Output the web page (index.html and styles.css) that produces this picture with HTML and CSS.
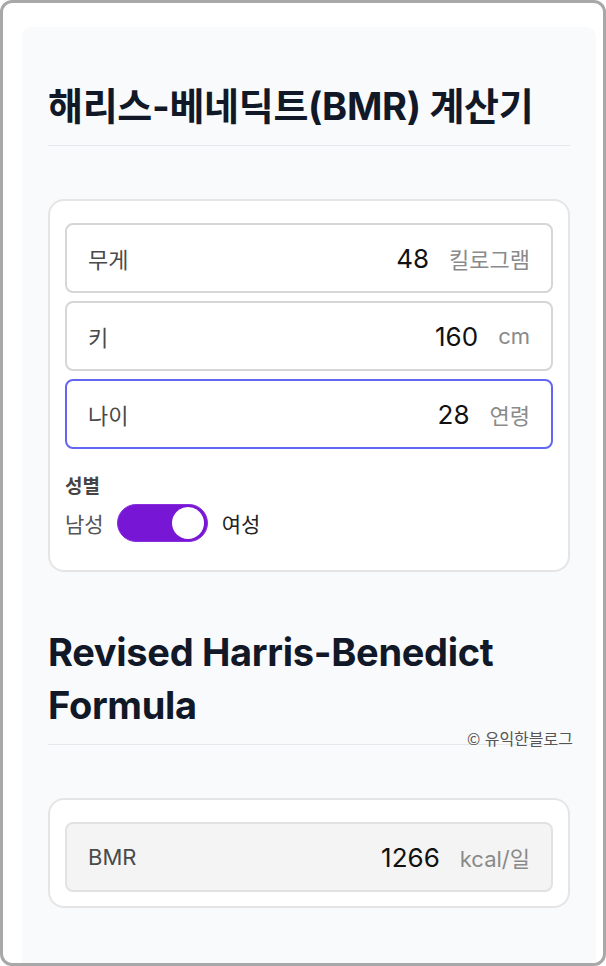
FILE: index.html
```html
<!DOCTYPE html>
<html lang="ko">
<head>
<meta charset="utf-8">
<title>해리스-베네딕트(BMR) 계산기</title>
<link rel="stylesheet" href="styles.css">
</head>
<body>
<div class="frame">
  <div class="panel">
    <div class="heading">
      <h2 class="title">해리스-베네딕트(BMR) 계산기</h2>
    </div>

    <div class="card card-inputs">
      <div class="field">
        <span class="label">무게</span>
        <span class="value">48</span>
        <span class="unit">킬로그램</span>
      </div>
      <div class="field">
        <span class="label">키</span>
        <span class="value">160</span>
        <span class="unit">cm</span>
      </div>
      <div class="field focused">
        <span class="label">나이</span>
        <span class="value">28</span>
        <span class="unit">연령</span>
      </div>
      <div class="gender">
        <div class="gender-title">성별</div>
        <div class="gender-row">
          <span class="g-off">남성</span>
          <span class="toggle"><span class="knob"></span></span>
          <span class="g-on">여성</span>
        </div>
      </div>
    </div>

    <div class="heading">
      <h2 class="title">Revised Harris-Benedict Formula</h2>
      <span class="watermark">© 유익한블로그</span>
    </div>

    <div class="card card-result">
      <div class="field readonly">
        <span class="label latin">BMR</span>
        <span class="value">1266</span>
        <span class="unit">kcal/일</span>
      </div>
    </div>
  </div>
</div>
</body>
</html>
```

FILE: styles.css
```css
html, body {
  margin: 0;
  padding: 0;
  background: #ffffff;
}

body {
  font-family: "Inter", "Noto Sans CJK KR", sans-serif;
}

.frame {
  box-sizing: border-box;
  width: 606px;
  height: 966px;
  border: 3px solid #a8a8a8;
  border-radius: 12px;
  background: #ffffff;
  overflow: hidden;
  padding: 24px 7px 0 19px;
}

.panel {
  box-sizing: border-box;
  height: 100%;
  background: #f9fafb;
  border-radius: 10px 10px 0 0;
  padding: 53px 26px 0 26px;
}

.heading {
  position: relative;
  border-bottom: 1px solid #e5e7eb;
  padding-bottom: 12px;
  margin-bottom: 53px;
}

.title {
  margin: 0;
  font-size: 38px;
  line-height: 53px;
  font-weight: 700;
  color: #111827;
  letter-spacing: -0.3px;
}

.watermark {
  position: absolute;
  right: -3px;
  bottom: -4px;
  font-family: "Noto Sans CJK KR", sans-serif;
  font-size: 16px;
  line-height: 19px;
  color: #555555;
}

.card {
  background: #ffffff;
  border: 2px solid #e5e5e5;
  border-radius: 16px;
  padding: 14px 15px 14px 15px;
}

.card-inputs {
  padding-bottom: 28px;
  margin-bottom: 54px;
}

.field {
  box-sizing: border-box;
  height: 70px;
  margin-top: 8px;
  border: 2px solid #d6d6d6;
  border-radius: 8px;
  background: #ffffff;
  display: flex;
  align-items: center;
  padding: 0 21px 0 21px;
}

.field.focused {
  border-color: #6366f1;
}

.field.readonly {
  background: #f4f4f4;
  border-color: #e2e2e2;
}

.label {
  flex: 1;
  font-family: "Noto Sans CJK KR", sans-serif;
  font-size: 22px;
  color: #4a4a4a;
}

.label.latin {
  font-family: "Inter", "Noto Sans CJK KR", sans-serif;
  font-size: 22px;
}

.value {
  font-family: "Inter", sans-serif;
  font-size: 26px;
  color: #111111;
  margin-right: 20px;
}

.unit {
  font-family: "Inter", "Noto Sans CJK KR", sans-serif;
  font-size: 22px;
  color: #8a8a8a;
}

.gender {
  margin-top: 22px;
}

.gender-title {
  font-family: "Noto Sans CJK KR", sans-serif;
  font-size: 19px;
  line-height: 27px;
  font-weight: 700;
  color: #444444;
}

.gender-row {
  margin-top: 6px;
  display: flex;
  align-items: center;
  gap: 13px;
  font-family: "Noto Sans CJK KR", sans-serif;
  font-size: 21px;
}

.g-off {
  color: #555555;
}

.g-on {
  color: #222222;
  margin-left: 1px;
}

.toggle {
  box-sizing: border-box;
  width: 91px;
  height: 38px;
  border-radius: 19px;
  background: #7816d6;
  border: 1px solid #8a2fe0;
  display: flex;
  align-items: center;
  justify-content: flex-end;
  padding-right: 3px;
}

.knob {
  width: 32px;
  height: 32px;
  border-radius: 50%;
  background: #ffffff;
}
```
